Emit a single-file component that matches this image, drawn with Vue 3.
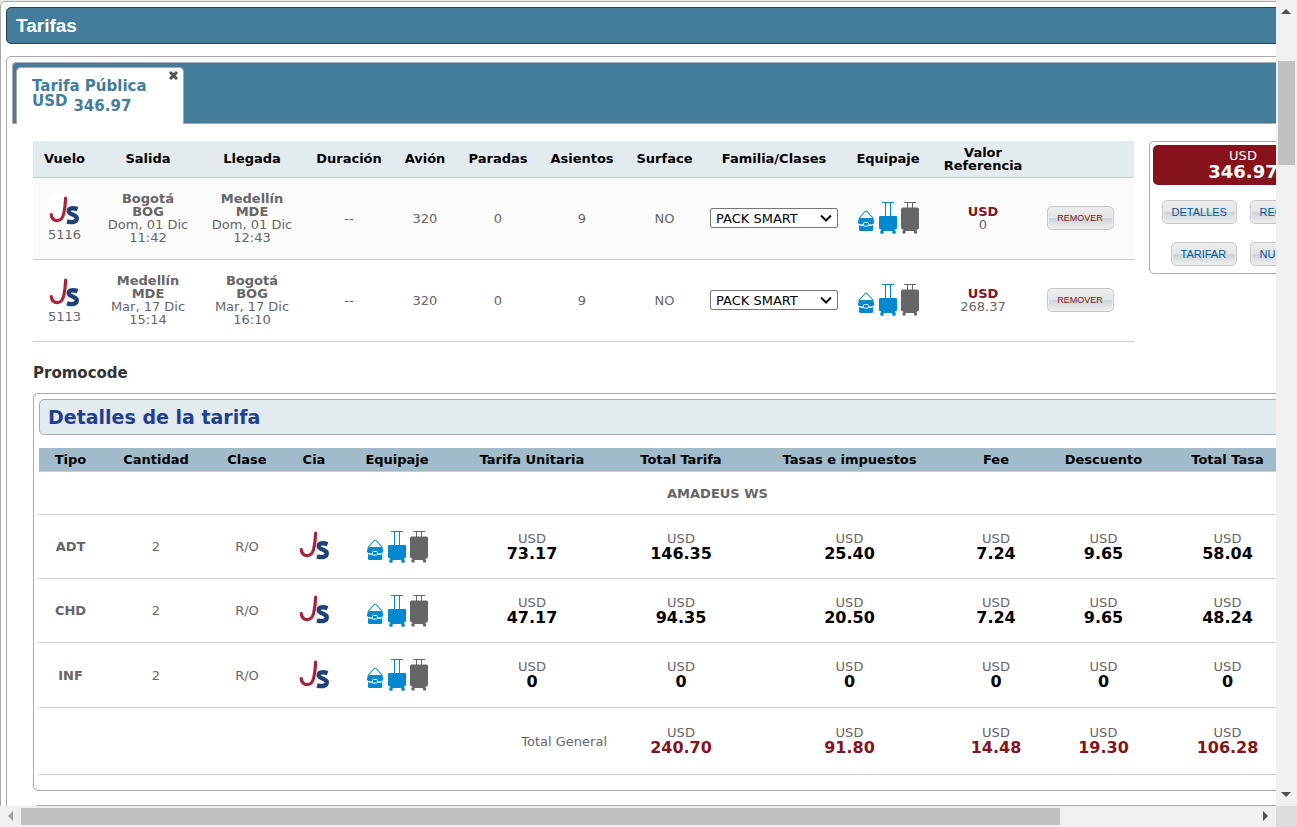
<script setup>
import { ref } from 'vue'

const flights = ref([
  { num: '5116', from: 'Bogotá', fromCode: 'BOG', depDate: 'Dom, 01 Dic', dep: '11:42', to: 'Medellín', toCode: 'MDE', arrDate: 'Dom, 01 Dic', arr: '12:43', value: '0', family: 'PACK SMART' },
  { num: '5113', from: 'Medellín', fromCode: 'MDE', depDate: 'Mar, 17 Dic', dep: '15:14', to: 'Bogotá', toCode: 'BOG', arrDate: 'Mar, 17 Dic', arr: '16:10', value: '268.37', family: 'PACK SMART' },
])
const flightHeads = ['Vuelo', 'Salida', 'Llegada', 'Duración', 'Avión', 'Paradas', 'Asientos', 'Surface', 'Familia/Clases', 'Equipaje', 'Valor Referencia', '']
const fareHeads = ['Tipo', 'Cantidad', 'Clase', 'Cia', 'Equipaje', 'Tarifa Unitaria', 'Total Tarifa', 'Tasas e impuestos', 'Fee', 'Descuento', 'Total Tasa', '']
const fares = [
  { type: 'ADT', values: ['73.17', '146.35', '25.40', '7.24', '9.65', '58.04'] },
  { type: 'CHD', values: ['47.17', '94.35', '20.50', '7.24', '9.65', '48.24'] },
  { type: 'INF', values: ['0', '0', '0', '0', '0', '0'] },
]
const totals = ['240.70', '91.80', '14.48', '19.30', '106.28']
</script>

<template>
  <svg class="defs" aria-hidden="true">
    <symbol id="airline" viewBox="0 0 31 31">
      <path d="M16.600 3.200C16.400 9 16 13 14.800 18.500 13.800 23 11.500 25.600 8.200 25.600 4.800 25.600 2.600 23 2.200 19.500" fill="none" stroke="#a9233b" stroke-width="3.200" stroke-linecap="round" />
      <path d="M28.600 14.200C24.500 12.800 19.600 12.800 19.700 16.200 19.800 20.100 27.800 18.900 27.800 23.300 27.800 27.800 22 27.600 18 26.300" fill="none" stroke="#1f4079" stroke-width="4.400" />
    </symbol>
    <symbol id="bags" viewBox="0 0 62 32">
      <g fill="#0089cf">
        <path d="M2.800 16h12.600q.9 0 1.100 1l.9 4L15 22.600H3.200L.8 21l.9-4q.2-1 1.100-1z" />
        <path d="M2 22.500l2 1.100h10.200l2-1.100v4.900q0 1.600-1.600 1.600h-11q-1.600 0-1.600-1.600z" />
        <path d="M1.700 16.600 8.100 9.600q1-.9 2 0L16.500 16.600" fill="none" stroke="#2d9cd6" stroke-width="1.200" />
        <path d="M1.500 22.300 4 23.300h10.200l2.500-1" fill="none" stroke="#fff" stroke-width="0.900" />
        <rect x="6.500" y="20.500" width="5" height="3.600" rx="1" stroke="#fff" stroke-width="0.900" />
        <rect x="25" y="0" width="12" height="1" />
        <rect x="28" y="0" width="1" height="15" />
        <rect x="33" y="0" width="1" height="15" />
        <path d="M23 14h16q1 0 1 1v11q0 1-1 1l-1.500 1v1H24.500v-1l-1.500-1q-1 0-1-1V15q0-1 1-1z" />
        <circle cx="25" cy="30" r="1.900" /><circle cx="37" cy="30" r="1.900" />
      </g>
      <g fill="#666">
        <rect x="47" y="0" width="12" height="1" />
        <rect x="50" y="0" width="1" height="7" /><rect x="55" y="0" width="1" height="7" />
        <path d="M45.500 5.500h15q1.500.5 1.500 1.500v19q0 1-1 1l-1.500 1v1h-13v-1l-1.500-1q-1 0-1-1V7q0-1 1.500-1.500z" />
        <circle cx="47" cy="30" r="1.700" /><circle cx="58.500" cy="30" r="1.700" />
      </g>
    </symbol>
  </svg>
  <div class="window">
    <div class="viewport">
      <main class="page">
        <h1 class="title">Tarifas</h1>
        <section class="tabs">
          <header class="tab-strip">
            <div class="tab">
              <a href="#fare" class="tab-link">
                <span>Tarifa Pública</span>
                <span class="tab-price"><span>USD</span><span class="tab-amount">346.97</span></span>
              </a>
              <button class="close" aria-label="Cerrar">
                <svg width="9" height="9" viewBox="0 0 9 9"><path d="M1 1 8 8M8 1 1 8" stroke="#505050" stroke-width="2.900" /></svg>
              </button>
            </div>
          </header>
          <div id="fare" class="content">
            <div class="summary">
              <table class="flights">
                <colgroup>
                  <col class="w63"><col class="w104"><col class="w104"><col class="w90"><col class="w62"><col class="w84"><col class="w84"><col class="w81"><col class="w138"><col class="w90"><col class="w100"><col class="w101">
                </colgroup>
                <thead>
                  <tr><th v-for="(h, i) in flightHeads" :key="i">{{ h }}</th></tr>
                </thead>
                <tbody>
                  <tr v-for="f in flights" :key="f.num">
                    <td><svg class="logo"><use href="#airline" /></svg><div>{{ f.num }}</div></td>
                    <td><b>{{ f.from }}<br>{{ f.fromCode }}</b><br>{{ f.depDate }}<br>{{ f.dep }}</td>
                    <td><b>{{ f.to }}<br>{{ f.toCode }}</b><br>{{ f.arrDate }}<br>{{ f.arr }}</td>
                    <td>--</td>
                    <td>320</td>
                    <td>0</td>
                    <td>9</td>
                    <td>NO</td>
                    <td>
                      <span class="select">
                        <select v-model="f.family" :aria-label="'Familia del vuelo ' + f.num"><option>PACK SMART</option></select>
                        <svg width="12" height="8" viewBox="0 0 12 8"><path d="M1 1.500 6 6.500 11 1.500" fill="none" stroke="#111" stroke-width="2" /></svg>
                      </span>
                    </td>
                    <td><svg class="bags"><use href="#bags" /></svg></td>
                    <td><b class="red">USD</b><br>{{ f.value }}</td>
                    <td class="action"><button class="btn remove">REMOVER</button></td>
                  </tr>
                </tbody>
              </table>
              <aside class="price">
                <div class="price-total">USD<strong>346.97</strong></div>
                <div class="price-actions">
                  <button class="btn detail">DETALLES</button>
                  <button class="btn detail">REGLAS</button>
                </div>
                <div class="price-actions">
                  <button class="btn">TARIFAR</button>
                  <button class="btn">NUEVA</button>
                </div>
              </aside>
            </div>
            <h3 class="promo">Promocode</h3>
            <section class="details">
              <h2>Detalles de la tarifa</h2>
              <table class="fares">
                <colgroup>
                  <col class="w63"><col class="w108"><col class="w74"><col class="w60"><col class="w106"><col class="w164"><col class="w134"><col class="w203"><col class="w90"><col class="w125"><col class="w123"><col class="w107">
                </colgroup>
                <thead>
                  <tr><th v-for="(h, i) in fareHeads" :key="i">{{ h }}</th></tr>
                </thead>
                <tbody>
                  <tr class="provider"><td colspan="12">AMADEUS WS</td></tr>
                  <tr v-for="f in fares" :key="f.type">
                    <td><b>{{ f.type }}</b></td>
                    <td>2</td>
                    <td>R/O</td>
                    <td><svg class="logo"><use href="#airline" /></svg></td>
                    <td><svg class="bags"><use href="#bags" /></svg></td>
                    <td v-for="(v, i) in f.values" :key="i">USD<strong>{{ v }}</strong></td>
                    <td></td>
                  </tr>
                </tbody>
                <tfoot>
                  <tr>
                    <td colspan="6" class="total-label">Total General</td>
                    <td v-for="(t, i) in totals" :key="i">USD<strong class="red">{{ t }}</strong></td>
                    <td></td>
                  </tr>
                </tfoot>
              </table>
            </section>
            <section class="details next"></section>
          </div>
        </section>
      </main>
    </div>
    <div class="bar vertical">
      <svg width="21" height="21" viewBox="0 0 21 21"><path d="M5 14 10 9 15 14z" fill="#505050" /></svg>
      <div class="track"><div class="thumb"></div></div>
      <svg width="21" height="21" viewBox="0 0 21 21"><path d="M5 7h10l-5 5z" fill="#505050" /></svg>
    </div>
    <div class="bar horizontal">
      <svg width="21" height="21" viewBox="0 0 21 21"><path d="M13 5v10L8 10z" fill="#a3a3a3" /></svg>
      <div class="track"><div class="thumb"></div></div>
      <svg width="21" height="21" viewBox="0 0 21 21"><path d="M8 5v10l5-5z" fill="#505050" /></svg>
    </div>
    <div class="corner"></div>
  </div>
</template>

<style>
body { margin: 0; background: #e8e8e8; }
</style>

<style scoped>
* { box-sizing: border-box; }
.defs { position: absolute; width: 0; height: 0; }
.window {
  display: grid;
  grid-template-columns: minmax(0, 1fr) 21px;
  grid-template-rows: minmax(0, 1fr) 21px;
  height: 100vh;
  font: 13px/13px Verdana, "DejaVu Sans", sans-serif;
  color: #666;
}
.viewport { overflow: hidden; padding-top: 1px; background: #e8e8e8; }
.page {
  min-width: 1515px;
  min-height: 100%;
  padding: 5px;
  background: #fff;
  border: 1px solid #aaa;
  border-radius: 5px;
}
.title {
  margin: 0 0 12px;
  padding: 0 9px;
  font: bold 19px/35px "Liberation Sans", Arial, sans-serif;
  color: #fff;
  background: #447c9b;
  border: 1px solid #2a4453;
  border-radius: 5px;
}
.tabs { padding: 5px; border: 1px solid #aaa; border-radius: 5px; }
.tab-strip {
  display: flex;
  padding: 4px 4px 0 3px;
  height: 62px;
  background: #447c9b;
  border: 1px solid #aaa;
  border-radius: 4px 0 0 0;
}
.tab {
  position: relative;
  width: 168px;
  height: 57px;
  padding: 11px 15px;
  background: #fff;
  border: 1px solid #aaa;
  border-bottom: 0;
  border-radius: 5px 5px 0 0;
}
.tab-link { display: block; font-weight: bold; font-size: 15px; line-height: 15px; color: #447c9b; text-decoration: none; white-space: nowrap; }
.tab-price { display: flex; gap: 6px; }
.tab-amount { padding-top: 5px; }
.close { position: absolute; top: 3px; right: 5px; width: 9px; height: 9px; padding: 0; border: 0; background: none; }
.close svg { display: block; }
.content { padding: 17px 101px 5px 21px; }
.summary { display: flex; gap: 15px; align-items: flex-start; margin-right: 65px; }
table { width: 100%; table-layout: fixed; border-collapse: separate; border-spacing: 0; }
th, td { padding: 0; text-align: center; vertical-align: middle; border-bottom: 1px solid #ccc; }
th { color: #000; }
.flights { flex: 1; }
.flights th { height: 37px; padding-bottom: 1px; background: #e4ebee; }
.flights td { height: 82px; padding-bottom: 1px; }
.flights tbody tr:nth-child(odd) { background: #fbfbfb; }
.flights .action { padding-right: 7px; }
.w60 { width: 60px; } .w62 { width: 62px; } .w63 { width: 63px; } .w74 { width: 74px; }
.w81 { width: 81px; } .w84 { width: 84px; } .w90 { width: 90px; } .w100 { width: 100px; }
.w101 { width: 101px; } .w104 { width: 104px; } .w106 { width: 106px; } .w107 { width: 107px; }
.w108 { width: 108px; } .w123 { width: 123px; } .w125 { width: 125px; } .w134 { width: 134px; }
.w138 { width: 138px; } .w164 { width: 164px; } .w203 { width: 203px; }
.logo { display: block; width: 31px; height: 31px; margin: 0 auto 2px; background: #fff; }
.bags { display: block; width: 62px; height: 32px; margin: 0 auto; }
.red, .fares .red { color: #86131b; }
.select { display: inline-flex; align-items: center; position: relative; width: 128px; }
.select select {
  appearance: none;
  width: 100%;
  height: 20px;
  padding: 0 5px;
  font: 13px Verdana, "DejaVu Sans", sans-serif;
  color: #000;
  background: #fff;
  border: 1px solid #767676;
  border-radius: 2px;
}
.select svg { position: absolute; right: 6px; pointer-events: none; }
.btn {
  height: 24px;
  padding: 0 10px;
  font: 11px "Liberation Sans", Arial, sans-serif;
  text-align: left;
  color: #0058a0;
  background: linear-gradient(#eee 0%, #e3e4e5 50%, #cdd2d6 52%, #e2e4e6 80%, #eee 100%);
  border: 1px solid #c8c8c8;
  border-radius: 5px;
  box-shadow: inset 0 0 0 1px #ececec;
}
.remove { width: 67px; padding: 0; font-size: 9px; text-align: center; color: #86131b; }
.price { width: 188px; padding: 3px; border: 1px solid #aaa; border-radius: 5px; }
.price-total { height: 40px; padding-top: 4px; text-align: center; color: #fff; background: #86131b; border-radius: 5px; }
.price-total strong { display: block; font-size: 18px; line-height: 19px; }
.price-actions { display: flex; justify-content: center; gap: 13px; margin: 15px 0 18px; }
.price-actions:last-child { margin-bottom: 4px; }
.price-actions .btn { width: 66px; padding: 0 0 0 9px; }
.price-actions .detail { width: 75px; }
.promo { margin: 21px 0 10px; font-size: 15px; line-height: 20px; color: #333; }
.details { padding: 5px 5px 15px; border: 1px solid #aaa; border-radius: 5px; }
.details h2 {
  margin: 0 0 13px;
  padding: 0 8px;
  font-size: 19px;
  line-height: 34px;
  color: #213f8e;
  background: #e4ebee;
  border: 1px solid #aaa;
  border-radius: 5px;
}
.next { height: 60px; margin-top: 14px; }
.fares th { height: 24px; background: #a1bbca; }
.fares td { height: 64px; }
.fares .provider td { height: 43px; font-weight: bold; }
.fares tbody tr:last-child td { height: 65px; }
.fares tfoot td { height: 67px; }
.fares strong { display: block; font-size: 16px; line-height: 17px; color: #000; }
.fares .total-label { padding-right: 7px; text-align: right; }
.bar { display: flex; background: #f0f0f0; }
.bar svg { flex: none; }
.track { flex: 1; }
.thumb { background: #c1c1c1; }
.vertical { flex-direction: column; }
.vertical .track { padding: 40px 2px 0; }
.vertical .thumb { height: 104px; }
.horizontal .track { padding: 2px 0; }
.horizontal .thumb { width: 84.2%; height: 17px; }
.corner { background: #dcdcdc; }
</style>
